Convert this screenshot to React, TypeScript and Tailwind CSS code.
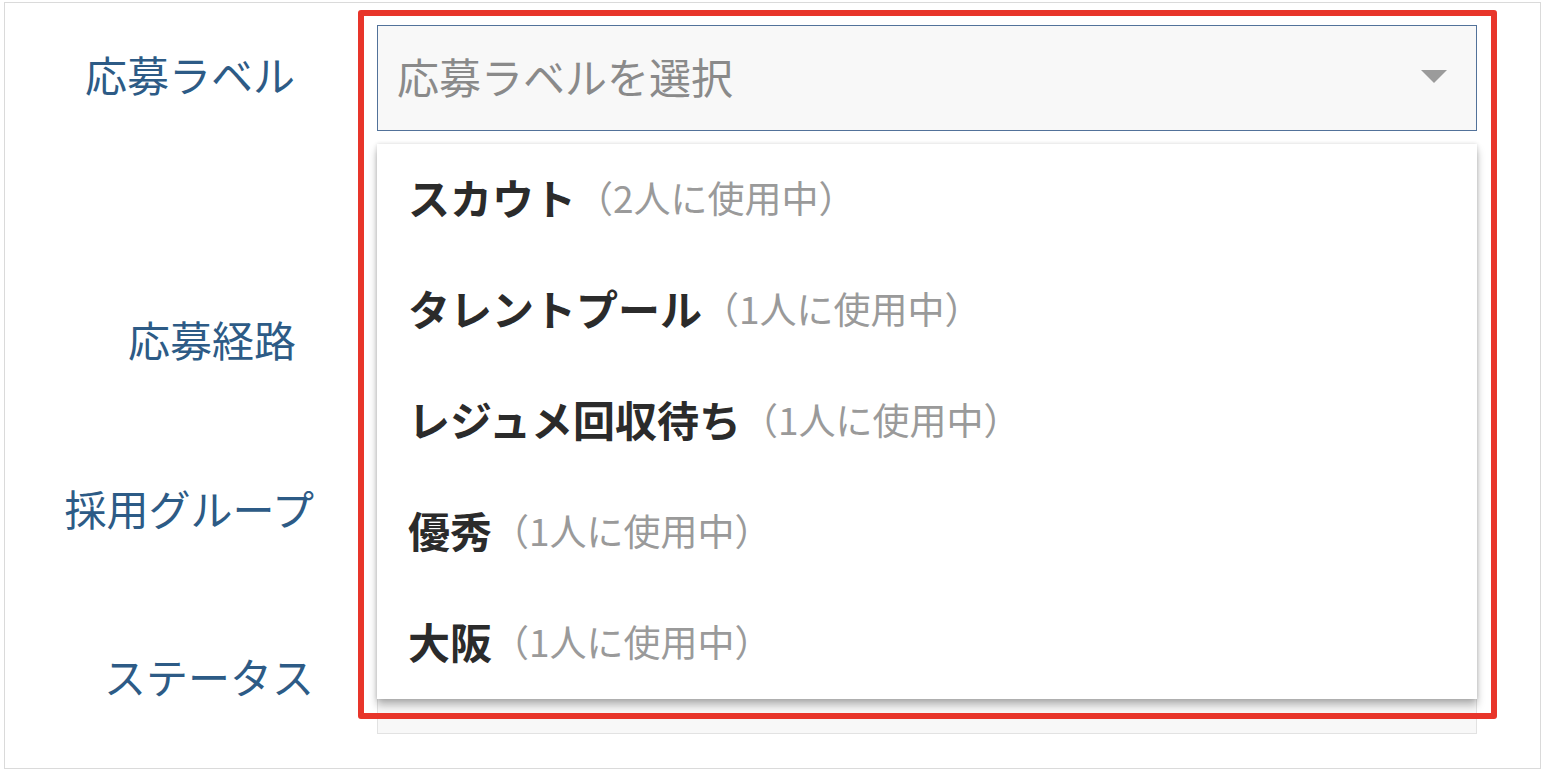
const items = [
  { name: "スカウト", count: 2 },
  { name: "タレントプール", count: 1 },
  { name: "レジュメ回収待ち", count: 1 },
  { name: "優秀", count: 1 },
  { name: "大阪", count: 1 },
];

function Arrow() {
  return (
    <svg width="26" height="13" viewBox="0 0 26 13" className="shrink-0">
      <polygon points="0,0 26,0 13,13" fill="#9b9b9b" />
    </svg>
  );
}

export default function App() {
  return (
    <div className="relative h-[778px] w-[1548px] bg-white font-['Noto_Sans_CJK_JP',sans-serif]">
      <div className="absolute left-[4px] top-[2px] h-[767px] w-[1537px] border border-[#dadada] bg-white">
        <div className="flex flex-col pt-[22px]">
          {/* 応募ラベル */}
          <div className="flex h-[106px] items-center">
            <div className="flex w-[372px] justify-end pb-[8px] pr-[82px] text-[42px] leading-none text-[#2d5b86]">
              応募ラベル
            </div>
            <div className="relative h-[106px] w-[1100px]">
              <div className="flex h-full items-center justify-between border border-[#52729a] bg-[#f8f8f8] pl-[19px] pr-[29px]">
                <span className="pb-[5px] text-[42px] leading-none text-[#8a8a8a]">応募ラベルを選択</span>
                <div className="-mt-[4px]">
                  <Arrow />
                </div>
              </div>

              {/* dropdown menu */}
              <div className="absolute left-0 top-[119px] z-10 w-[1100px] bg-white shadow-[0_6px_8px_rgba(0,0,0,0.28),0_0_4px_rgba(0,0,0,0.14)]">
                {items.map((item) => (
                  <div key={item.name} className="flex h-[111px] items-center px-[31px] pb-[5px]">
                    <span className="text-[42px] font-bold leading-none text-[#2b2b2b]">{item.name}</span>
                    <span className="text-[37px] leading-none text-[#9a9a9a]">（{item.count}人に使用中）</span>
                  </div>
                ))}
              </div>
            </div>
          </div>

          {/* 応募経路 */}
          <div className="mt-[156px] flex h-[106px] items-center">
            <div className="flex w-[372px] justify-end pb-[2px] pr-[81px] text-[42px] leading-none text-[#2d5b86]">
              応募経路
            </div>
            <div className="h-[106px] w-[1100px] border border-[#e2e2e2] bg-[#f8f8f8]" />
          </div>

          {/* 採用グループ */}
          <div className="mt-[62px] flex h-[106px] items-center">
            <div className="flex w-[372px] justify-end pr-[63px] text-[42px] leading-none text-[#2d5b86]">
              採用グループ
            </div>
            <div className="h-[106px] w-[1100px] border border-[#e2e2e2] bg-[#f8f8f8]" />
          </div>

          {/* ステータス */}
          <div className="mt-[67px] flex h-[106px] items-center">
            <div className="flex w-[372px] justify-end pb-[10px] pr-[63px] text-[42px] leading-none text-[#2d5b86]">
              ステータス
            </div>
            <div className="h-[106px] w-[1100px] border border-[#e2e2e2] bg-[#f8f8f8]" />
          </div>
        </div>
      </div>

      {/* annotation frame */}
      <div className="pointer-events-none absolute left-[358px] top-[10px] z-20 h-[709px] w-[1139px] rounded-[3px] border-[6px] border-[#e8352a]" />
    </div>
  );
}
